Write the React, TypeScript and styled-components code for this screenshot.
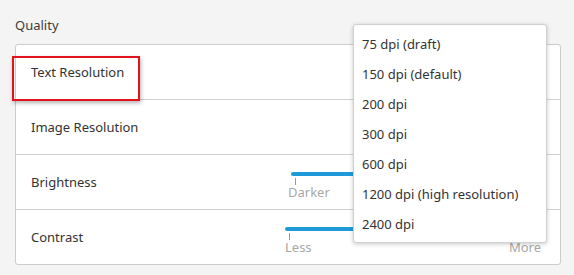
import React from "react";
import styled, { createGlobalStyle } from "styled-components";

const Global = createGlobalStyle`
  html, body { margin: 0; padding: 0; background: #f4f4f4; }
  body { font-family: "Noto Sans", "Open Sans", sans-serif; color: #333; }
`;

const Page = styled.div`
  position: relative;
  width: 574px;
  height: 275px;
  box-sizing: border-box;
  padding: 15px 13px 0 15px;
`;

const SectionTitle = styled.div`
  font-size: 13px;
  line-height: 20px;
  height: 29px;
  color: #3c3c3c;
`;

const Card = styled.div`
  background: #fff;
  border: 1px solid #cdcdcd;
  border-radius: 3px;
  display: flex;
  flex-direction: column;
`;

const Row = styled.div<{ $last?: boolean }>`
  height: 54px;
  display: flex;
  align-items: center;
  padding-left: 15px;
  border-bottom: ${(p) => (p.$last ? "none" : "1px solid #d2d2d2")};
  position: relative;
`;

const Label = styled.div`
  font-size: 13px;
  color: #333;
  width: 254px;
  flex: none;
`;

const Scale = styled.div<{ $offset: number }>`
  align-self: stretch;
  flex: 1;
  position: relative;
  margin-left: ${(p) => p.$offset}px;
  margin-right: 19px;
  display: flex;
  flex-direction: column;
  padding-top: 17px;
`;

const Track = styled.div`
  height: 4px;
  border-radius: 2px;
  background: #1e9ad8;
`;

const Tick = styled.div<{ $left: number }>`
  width: 1px;
  height: 7px;
  background: #9a9a9a;
  margin-left: ${(p) => p.$left}px;
  margin-top: 2px;
`;

const Marks = styled.div<{ $shift?: number }>`
  display: flex;
  justify-content: space-between;
  font-size: 13px;
  line-height: 15px;
  color: #a8a8a8;
  margin-left: ${(p) => p.$shift ?? 0}px;
`;

const Highlight = styled.div`
  position: absolute;
  left: 12px;
  top: 56px;
  width: 124px;
  height: 41px;
  border: 2px solid #e2131b;
  box-shadow: 1px 2px 4px rgba(0, 0, 0, 0.3);
  pointer-events: none;
`;

const Popup = styled.div`
  position: absolute;
  left: 353px;
  top: 24px;
  width: 194px;
  box-sizing: border-box;
  background: #fff;
  border: 1px solid #d0d0d0;
  border-radius: 3px;
  box-shadow: 0 1px 4px rgba(0, 0, 0, 0.22);
  padding: 4px 0 3px;
  display: flex;
  flex-direction: column;
`;

const Item = styled.div`
  height: 30px;
  display: flex;
  align-items: center;
  padding-left: 8px;
  font-size: 13px;
  color: #333;
`;

const items = [
  "75 dpi (draft)",
  "150 dpi (default)",
  "200 dpi",
  "300 dpi",
  "600 dpi",
  "1200 dpi (high resolution)",
  "2400 dpi",
];

export default function App() {
  return (
    <>
      <Global />
      <Page>
        <SectionTitle>Quality</SectionTitle>
        <Card>
          <Row>
            <Label>Text Resolution</Label>
          </Row>
          <Row>
            <Label>Image Resolution</Label>
          </Row>
          <Row>
            <Label>Brightness</Label>
            <Scale $offset={6}>
              <Track />
              <Tick $left={4} />
              <Marks $shift={-3}>
                <span>Darker</span>
              </Marks>
            </Scale>
          </Row>
          <Row $last>
            <Label>Contrast</Label>
            <Scale $offset={0}>
              <Track />
              <Tick $left={4} />
              <Marks>
                <span>Less</span>
                <span>More</span>
              </Marks>
            </Scale>
          </Row>
        </Card>
        <Highlight />
        <Popup>
          {items.map((t) => (
            <Item key={t}>{t}</Item>
          ))}
        </Popup>
      </Page>
    </>
  );
}
